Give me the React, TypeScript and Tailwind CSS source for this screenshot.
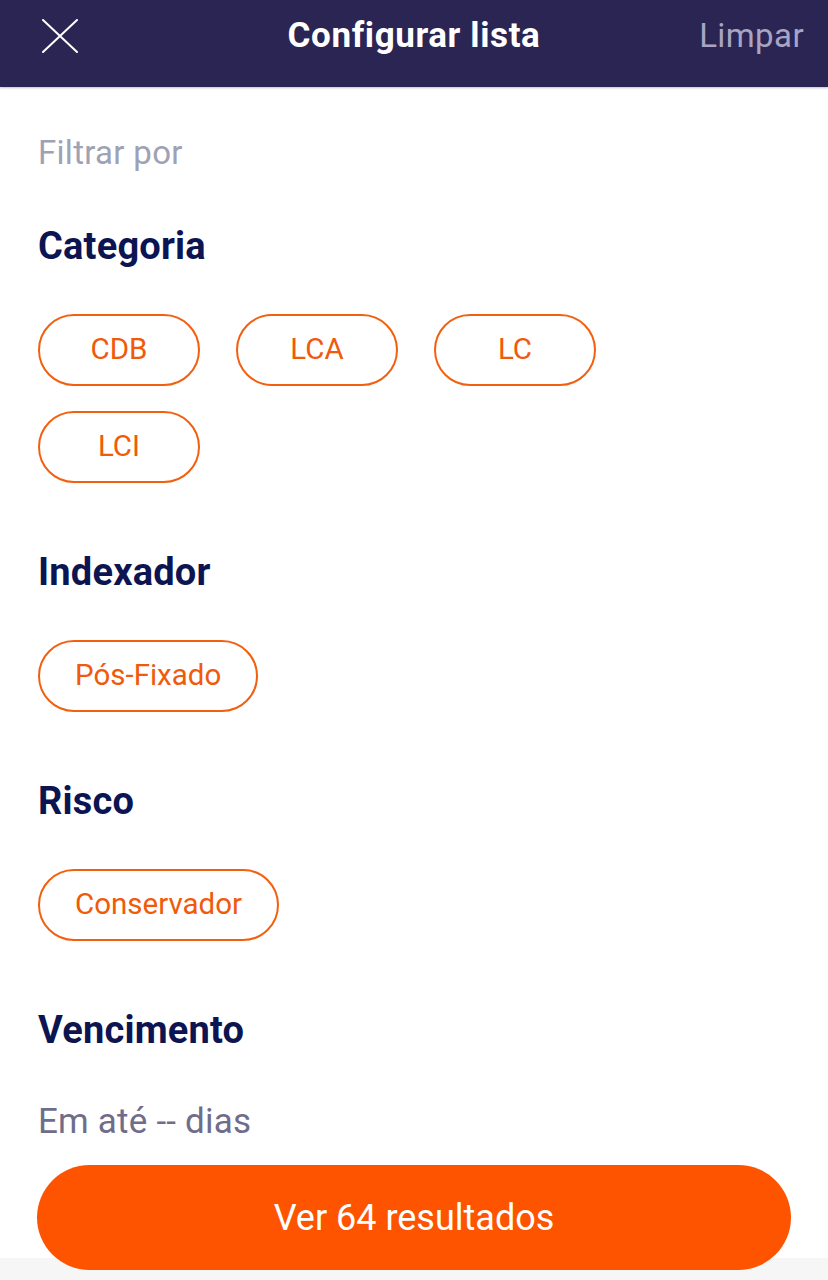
import React from "react";

const sections = [
  { title: "Categoria", chips: ["CDB", "LCA", "LC", "LCI"] },
  { title: "Indexador", chips: ["Pós-Fixado"] },
  { title: "Risco", chips: ["Conservador"] },
];

function Chip({ label }: { label: string }) {
  return (
    <button className="h-[72px] min-w-[162px] px-[35px] rounded-full border-2 border-[#f2600f] text-[#f05a0a] text-[29.5px] leading-none bg-white">
      {label}
    </button>
  );
}

export default function App() {
  return (
    <div className="w-[828px] h-[1280px] bg-white flex flex-col font-['Roboto',sans-serif] overflow-hidden">
      {/* Header */}
      <header className="h-[87px] shrink-0 bg-[#2b2553] grid grid-cols-[1fr_auto_1fr] items-center px-[24px] pb-[15px] shadow-[0_1px_2px_rgba(0,0,0,0.25)]">
        <svg width="36" height="34" viewBox="0 0 36 34" className="shrink-0 ml-[18px]">
          <path d="M1 1 L35 33 M35 1 L1 33" stroke="#fff" strokeWidth="2" strokeLinecap="round" />
        </svg>
        <h1 className="text-white font-bold text-[35px] tracking-[0.6px]">Configurar lista</h1>
        <span className="justify-self-end text-[#a8a5c4] text-[33px] tracking-[0.4px]">Limpar</span>
      </header>

      {/* Content */}
      <main className="flex-1 flex flex-col px-[38px]">
        <p className="mt-[48px] text-[33px] leading-[36px] tracking-[0.3px] text-[#9fa1b4]">Filtrar por</p>

        {sections.map((s, i) => (
          <section key={s.title} className={i === 0 ? "mt-[54px]" : "mt-[68px]"}>
            <h2 className="text-[38px] leading-[42px] font-bold tracking-[0.2px] text-[#0c1551]">{s.title}</h2>
            <div className="mt-[47px] flex flex-wrap gap-x-[36px] gap-y-[25px] max-w-[600px]">
              {s.chips.map((c) => (
                <Chip key={c} label={c} />
              ))}
            </div>
          </section>
        ))}

        <section className="mt-[68px]">
          <h2 className="text-[38px] leading-[42px] font-bold tracking-[0.2px] text-[#0c1551]">Vencimento</h2>
          <p className="mt-[53px] text-[35px] leading-[36px] tracking-[0.2px] text-[#6f6d8b]">Em até -- dias</p>
        </section>
      </main>

      {/* Footer */}
      <div className="shrink-0 px-[37px] bg-[linear-gradient(to_bottom,#fff_93px,#f6f6f6_93px)]">
        <button className="w-full h-[105px] rounded-full bg-[#fe5400] text-white text-[36px]">
          Ver 64 resultados
        </button>
      </div>
      <div className="h-[10px] shrink-0 bg-[#f6f6f6]" />
    </div>
  );
}
